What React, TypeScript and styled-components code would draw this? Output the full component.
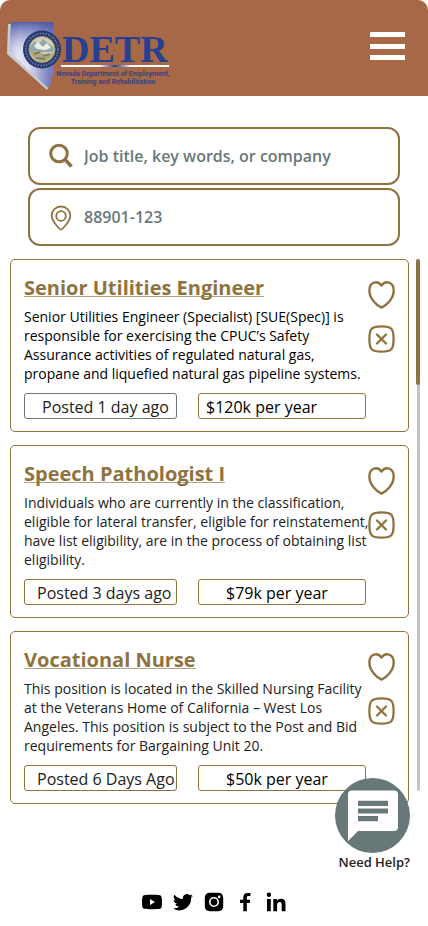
import React from "react";
import styled, { createGlobalStyle } from "styled-components";

const gold = "#8e7340";
const slate = "#687878";

const GlobalStyle = createGlobalStyle`
  *, *::before, *::after { box-sizing: border-box; }
  body {
    margin: 0;
    background: #fff;
    font-family: "Open Sans", "Noto Sans", sans-serif;
    color: #222;
  }
  button, input { font: inherit; }
`;

const Page = styled.div`
  min-height: 100vh;
  display: flex;
  flex-direction: column;
`;

const Header = styled.header`
  height: 96px;
  flex: none;
  display: flex;
  align-items: center;
  justify-content: space-between;
  padding: 0 23px 0 6px;
  background: #a76848;
  border-radius: 10px 10px 0 0;
`;

const LogoLink = styled.a`
  display: block;
  height: 72px;
  margin-top: 16px;
`;

const MenuButton = styled.button`
  display: flex;
  flex-direction: column;
  justify-content: space-between;
  width: 35px;
  height: 28px;
  margin-bottom: 4px;
  padding: 0;
  border: 0;
  background: none;
  cursor: pointer;
`;

const MenuBar = styled.span`
  height: 5px;
  background: #fff;
`;

const SearchForm = styled.form`
  display: grid;
  gap: 3px;
  padding: 31px 28px 13px;
`;

const Field = styled.label`
  display: flex;
  align-items: center;
  gap: 7px;
  height: 58px;
  padding: 0 19px;
  border: 2px solid ${gold};
  border-radius: 12px;
  color: ${gold};
`;

const FieldInput = styled.input`
  flex: 1;
  min-width: 0;
  padding: 0;
  border: 0;
  outline: 0;
  background: none;
  font-size: 16px;
  line-height: 24px;
  font-weight: 600;
  color: ${slate};
  &::placeholder { color: ${slate}; opacity: 1; }
`;

const Results = styled.main`
  position: relative;
  display: flex;
  gap: 7px;
  padding: 0 8px 0 10px;
`;

const CardList = styled.div`
  flex: 1;
  min-width: 0;
  display: grid;
  gap: 13px;
`;

const ScrollTrack = styled.div`
  width: 4px;
  height: 532px;
  border-radius: 2px;
  border-left: 1px solid #fff;
  background: #c4c4c4;
`;

const ScrollThumb = styled.div`
  width: 4px;
  height: 126px;
  margin-left: -1px;
  border-radius: 2px;
  background: ${gold};
`;

const Card = styled.article`
  display: grid;
  grid-template-columns: minmax(0, 1fr) 28px;
  padding: 13px 12px 12px 13px;
  border: 1px solid ${gold};
  border-radius: 5px;
`;

const CardTitle = styled.h2`
  margin: 0 0 6px;
  padding-top: 1px;
  font-size: 20px;
  line-height: 27px;
  font-weight: 700;
`;

const TitleLink = styled.a`
  color: ${gold};
  text-decoration: underline;
  text-decoration-color: #b5a47f;
  text-decoration-thickness: 1px;
  text-decoration-skip-ink: none;
  text-underline-offset: 1px;
`;

const Description = styled.p<{ $dark?: boolean }>`
  margin: 0 -2px 10px 0;
  font-size: 14px;
  line-height: 19px;
  color: ${(p) => (p.$dark ? "#000" : "#222")};
`;

const Tags = styled.div`
  display: grid;
  grid-template-columns: 153fr 168fr;
  gap: 21px;
  margin-right: 2px;
`;

const Tag = styled.span<{ $indent: number; $border?: string; $color?: string }>`
  height: 26px;
  padding-left: ${(p) => p.$indent}px;
  border: 1px solid ${(p) => p.$border ?? gold};
  border-radius: 3px;
  font-size: 16px;
  line-height: 26px;
  white-space: nowrap;
  color: ${(p) => p.$color ?? "#222"};
`;

const Actions = styled.div`
  display: flex;
  flex-direction: column;
  gap: 15px;
  padding-top: 7px;
`;

const IconButton = styled.button`
  display: block;
  width: 28px;
  height: 30px;
  padding: 0;
  border: 0;
  background: none;
  color: ${gold};
  cursor: pointer;
`;

const HelpButton = styled.button`
  position: absolute;
  top: 519px;
  right: 18px;
  display: flex;
  flex-direction: column;
  align-items: center;
  padding: 0;
  border: 0;
  background: none;
  font-size: 13px;
  line-height: 18px;
  font-weight: 600;
  color: #222;
  white-space: nowrap;
  cursor: pointer;
`;

const HelpLabel = styled.span`
  align-self: flex-end;
`;

const Footer = styled.footer`
  display: flex;
  justify-content: center;
  gap: 11px;
  margin-top: auto;
  padding: 60px 0 14px;
`;

const SocialLink = styled.a`
  display: block;
  width: 20px;
  height: 20px;
  color: #000;
`;

function Logo() {
  return (
    <svg width="166" height="72" viewBox="6 20 166 72" role="img" aria-label="DETR">
      <defs>
        <linearGradient id="state" x1="0" y1="0" x2="1" y2="0.15">
          <stop offset="0" stopColor="#b9bde0" />
          <stop offset="0.25" stopColor="#eef0fa" />
          <stop offset="0.5" stopColor="#e3e5f5" />
          <stop offset="1" stopColor="#6b72b6" />
        </linearGradient>
        <linearGradient id="shade" x1="0" y1="0" x2="0" y2="1">
          <stop offset="0" stopColor="#4850a2" stopOpacity="0.9" />
          <stop offset="0.4" stopColor="#8f95cb" stopOpacity="0.2" />
          <stop offset="1" stopColor="#fff" stopOpacity="0.1" />
        </linearGradient>
        <linearGradient id="rule">
          <stop offset="0" stopColor="#fff" />
          <stop offset="0.35" stopColor="#fff" />
          <stop offset="0.5" stopColor="#27408f" />
          <stop offset="0.65" stopColor="#fff" />
          <stop offset="1" stopColor="#fff" />
        </linearGradient>
      </defs>
      <path d="M8 24 L7 54 L47 90 L49 86 L10 51 L11 24Z" fill="#c9ccd0" />
      <path d="M11 22 H53.5 V76 L50 78 L51.5 82 L48 88 L9.500 52Z" fill="url(#state)" />
      <path d="M11 22 H53.5 V76 L50 78 L51.500 82 L48 88 L9.500 52Z" fill="url(#shade)" />
      <circle cx="42" cy="49.500" r="19" fill="#273a70" />
      <circle cx="42" cy="49.500" r="16" fill="none" stroke="#66769f" strokeWidth="2" strokeDasharray="1.500 1.300" />
      <circle cx="42" cy="49.500" r="13" fill="#d2ceb7" stroke="#a99b62" strokeWidth="1" />
      <path d="M30 46 L35 41 L38 44 L43 39 L49 44 L54 47 L53 52 H30Z" fill="#8fa9ae" />
      <path d="M34 46 L38 42 L43 47 L47 43 L51 48 L45 50 L37 49Z" fill="#f0eee2" />
      <path d="M30 52 Q37 48 42 53 T54 52 Q52 60 42 62 Q33 60 30 52Z" fill="#b1a67b" />
      <path d="M34 54 L40 52 M43 56 L50 54 M36 58 L45 59" stroke="#6d7860" strokeWidth="1.500" />
      <text x="62" y="62" fontFamily="'Liberation Serif', serif" fontWeight="700" fontSize="38" fill="#27408f">DETR</text>
      <rect x="61" y="65" width="108" height="2" fill="url(#rule)" />
      <g fontFamily="Roboto, 'Liberation Sans', sans-serif" fontWeight="700" fontSize="7" fill="#38437f" textAnchor="middle">
        <text x="113" y="76">Nevada Department of Employment,</text>
        <text x="113" y="84">Training and Rehabilitation</text>
      </g>
    </svg>
  );
}

const SearchIcon = () => (
  <svg width="28" height="28" viewBox="0 0 28 28" fill="none" stroke="currentColor" aria-hidden="true">
    <circle cx="10" cy="11.500" r="8.300" strokeWidth="3" />
    <path d="M16 17.500 L22.500 24.500" strokeWidth="3.500" />
  </svg>
);

const PinIcon = () => (
  <svg width="28" height="28" viewBox="0 0 28 28" fill="none" stroke="currentColor" strokeWidth="1.800" aria-hidden="true">
    <path d="M12 26.500 C11 26.500 2.700 18.500 2.700 12.500 A9.300 9 0 0 1 21.300 12.500 C21.300 18.500 13 26.500 12 26.500Z" />
    <circle cx="12" cy="13" r="4.800" />
  </svg>
);

const HeartIcon = () => (
  <svg width="28" height="30" viewBox="0 0 28 30" fill="none" stroke="currentColor" strokeWidth="2.400" strokeLinejoin="round" aria-hidden="true">
    <path d="M13.500 5.500 C10 0.300 1.400 1.200 1.400 10.500 C1.400 19 9 25.500 13.500 27.600 C18 25.500 25.700 19 25.700 10.500 C25.700 1.200 17 0.300 13.500 5.500Z" />
  </svg>
);

const DismissIcon = () => (
  <svg width="28" height="30" viewBox="0 0 28 30" fill="none" stroke="currentColor" strokeLinecap="round" aria-hidden="true">
    <path d="M13.500 1.400 C23.500 1.400 25.600 3.500 25.600 14 C25.600 24.500 23.500 26.600 13.500 26.600 C3.500 26.600 1.400 24.500 1.400 14 C1.400 3.500 3.500 1.400 13.500 1.400Z" strokeWidth="2.300" />
    <path d="M9 9.500 L18 18.500 M18 9.500 L9 18.500" strokeWidth="2.300" />
  </svg>
);

const ChatIcon = () => (
  <svg width="75" height="75" viewBox="0 0 75 75" aria-hidden="true">
    <circle cx="37.500" cy="37.500" r="37.500" fill={slate} />
    <path d="M13 63 V16.500 Q13 12.500 17 12.500 H59 Q63 12.500 63 16.500 V49 Q63 53 59 53 H23Z" fill="#fff" />
    <path d="M23 22.700 H53 V28 H23Z M23 30.500 H53 V35.500 H23Z M23 38 H43 V43.200 H23Z" fill={slate} />
  </svg>
);

const socials = [
  {
    name: "YouTube",
    path: "M10 2.800 C17 2.800 18.500 3 19.300 4.200 C20.200 5.800 20.200 14.200 19.300 15.800 C18.500 17 17 17.200 10 17.200 C3 17.200 1.500 17 0.700 15.800 C-0.200 14.200 -0.200 5.800 0.700 4.200 C1.500 3 3 2.800 10 2.800Z M8 7 V13 L13 10Z",
  },
  {
    name: "Twitter",
    path: "M20 3.900 C19.300 4.200 18.500 4.400 17.700 4.500 C18.500 4 19.200 3.200 19.500 2.300 C18.700 2.800 17.800 3.100 16.900 3.300 A4.100 4.100 0 0 0 9.900 7 A11.700 11.700 0 0 1 1.400 2.700 A4.100 4.100 0 0 0 2.700 8.200 C2 8.200 1.400 8 0.800 7.700 A4.100 4.100 0 0 0 4.100 11.800 C3.500 12 2.900 12 2.300 11.900 A4.100 4.100 0 0 0 6.100 14.700 A8.300 8.300 0 0 1 0 16.400 A11.700 11.700 0 0 0 18 5.900 C18.800 5.400 19.500 4.700 20 3.900Z",
  },
  {
    name: "Instagram",
    path: "M6 0.800 H14 Q19.200 0.800 19.200 6 V14 Q19.200 19.200 14 19.200 H6 Q0.800 19.200 0.800 14 V6 Q0.800 0.800 6 0.800Z M10 5 A5 5 0 1 0 10 15 A5 5 0 1 0 10 5Z M10 6.600 A3.400 3.400 0 1 1 10 13.400 A3.400 3.400 0 1 1 10 6.600Z M15.200 3.600 A1.300 1.300 0 1 0 15.200 6.200 A1.300 1.300 0 1 0 15.200 3.600Z",
  },
  {
    name: "Facebook",
    path: "M8.300 19.200 V11 H5 V7.800 H8.300 V5.300 C8.300 2.300 10 0.900 12.700 0.900 H15.400 V4 H13.500 C12.200 4 11.800 4.700 11.800 5.700 V7.800 H15.200 L14.700 11 H11.800 V19.200Z",
  },
  {
    name: "LinkedIn",
    path: "M1 7 H4.800 V19.200 H1Z M2.900 0.600 A2.200 2.200 0 1 1 2.900 5 A2.200 2.200 0 1 1 2.900 0.600Z M7.300 7 H11 V8.700 C11.700 7.500 13 6.700 14.900 6.700 C18.700 6.700 19.500 9 19.500 12.300 V19.200 H15.700 V13 C15.700 11.500 15.600 10 13.700 10 C11.700 10 11.100 11.400 11.100 13 V19.200 H7.300Z",
  },
];

interface Job {
  title: string;
  text: string;
  posted: string;
  pay: string;
  postedIndent: number;
  payIndent: number;
  featured?: boolean;
}

const jobs: Job[] = [
  {
    title: "Senior Utilities Engineer",
    text: "Senior Utilities Engineer (Specialist) [SUE(Spec)] is responsible for exercising the CPUC’s Safety Assurance activities of regulated natural gas, propane and liquefied natural gas pipeline systems.",
    posted: "Posted 1 day ago",
    pay: "$120k per year",
    postedIndent: 17,
    payIndent: 7,
    featured: true,
  },
  {
    title: "Speech Pathologist I",
    text: "Individuals who are currently in the classification, eligible for lateral transfer, eligible for reinstatement, have list eligibility, are in the process of obtaining list eligibility.",
    posted: "Posted 3 days ago",
    pay: "$79k per year",
    postedIndent: 12,
    payIndent: 27,
  },
  {
    title: "Vocational Nurse",
    text: "This position is located in the Skilled Nursing Facility at the Veterans Home of California – West Los Angeles. This position is subject to the Post and Bid requirements for Bargaining Unit 20.",
    posted: "Posted 6 Days Ago",
    pay: "$50k per year",
    postedIndent: 12,
    payIndent: 27,
  },
];

function JobCard({ job }: { job: Job }) {
  return (
    <Card>
      <div>
        <CardTitle>
          <TitleLink href="#">{job.title}</TitleLink>
        </CardTitle>
        <Description $dark={job.featured}>{job.text}</Description>
        <Tags>
          <Tag $indent={job.postedIndent} $border={job.featured ? slate : gold}>{job.posted}</Tag>
          <Tag $indent={job.payIndent} $color="#000">{job.pay}</Tag>
        </Tags>
      </div>
      <Actions>
        <IconButton type="button" aria-label="Save job"><HeartIcon /></IconButton>
        <IconButton type="button" aria-label="Dismiss job"><DismissIcon /></IconButton>
      </Actions>
    </Card>
  );
}

export default function App() {
  return (
    <Page>
      <GlobalStyle />
      <Header>
        <LogoLink href="#" aria-label="DETR home"><Logo /></LogoLink>
        <MenuButton type="button" aria-label="Menu">
          <MenuBar />
          <MenuBar />
          <MenuBar />
        </MenuButton>
      </Header>
      <SearchForm>
        <Field>
          <SearchIcon />
          <FieldInput type="text" aria-label="Keywords" placeholder="Job title, key words, or company" />
        </Field>
        <Field>
          <PinIcon />
          <FieldInput type="text" aria-label="Location" defaultValue="88901-123" />
        </Field>
      </SearchForm>
      <Results>
        <CardList>
          {jobs.map((job) => <JobCard key={job.title} job={job} />)}
        </CardList>
        <ScrollTrack><ScrollThumb /></ScrollTrack>
        <HelpButton type="button">
          <ChatIcon />
          <HelpLabel>Need Help?</HelpLabel>
        </HelpButton>
      </Results>
      <Footer>
        {socials.map((s) => (
          <SocialLink key={s.name} href="#" aria-label={s.name}>
            <svg width="20" height="20" viewBox="0 0 20 20" fill="currentColor" fillRule="evenodd" aria-hidden="true">
              <path d={s.path} />
            </svg>
          </SocialLink>
        ))}
      </Footer>
    </Page>
  );
}
